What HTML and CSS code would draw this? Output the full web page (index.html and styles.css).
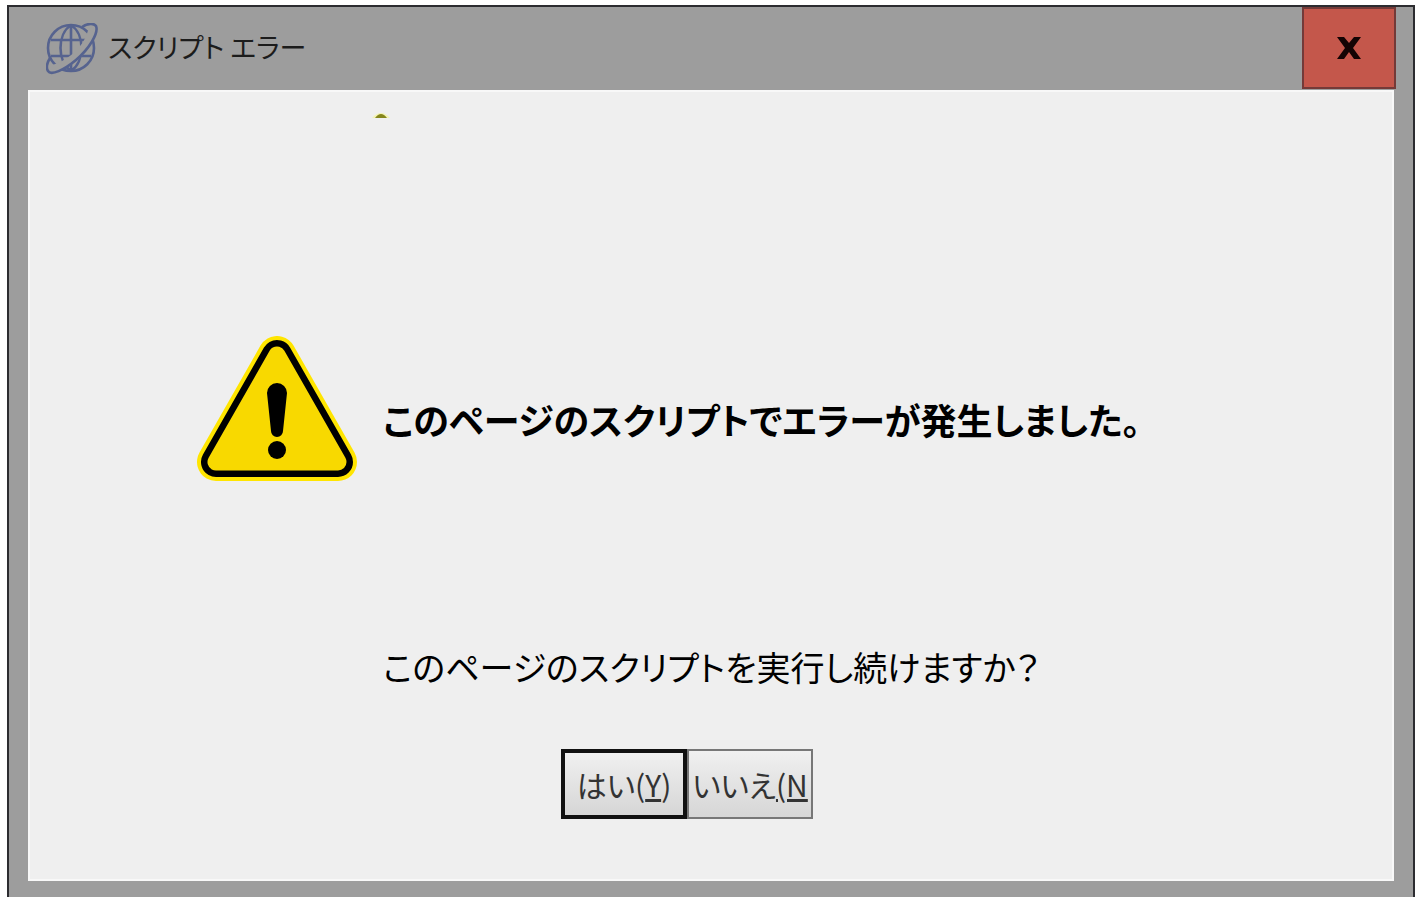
FILE: index.html
```html
<!DOCTYPE html>
<html lang="ja">

<head>
    <meta charset="UTF-8">
    <meta name="viewport" content="width=device-width, initial-scale=1.0">
    <title>スクリプト エラー</title>
    <link rel="stylesheet" href="styles.css">
</head>

<body>
    <div class="dialog" role="alertdialog" aria-labelledby="dialogTitle" aria-describedby="dialogMessage">
        <header class="title-bar">
            <svg class="globe" viewBox="0 0 52 52" aria-hidden="true">
                <circle cx="25" cy="25" r="23" />
                <path d="M25 2V48M25 2C11 11 11 39 25 48M25 2C39 11 39 39 25 48M5 17H45M5 33H45" />
                <path class="orbit-gap" d="M46 8C44 18 36 28 28 35C19 42 11 46 4 46" />
                <path d="M36 4C42 0 48 0 50 3C53 10 43 26 30 37C18 47 5 53 2 48C0 45 1 40 4 35" />
            </svg>
            <h1 class="title" id="dialogTitle">スクリプト エラー</h1>
            <button type="button" class="close" aria-label="閉じる">
                <svg viewBox="0 0 24 24" aria-hidden="true">
                    <path d="M0 1H7L12 7L17 1H24L16 12L24 23H17L12 16L7 23H0L8 12Z" />
                </svg>
            </button>
        </header>

        <main class="content">
            <svg class="speck" viewBox="0 0 18 6" aria-hidden="true">
                <path class="glow" d="M0 6Q9 -4 18 6Z" />
                <path d="M3 6Q9 -2 15 6Z" />
            </svg>

            <div class="message">
                <svg class="warning" viewBox="0 0 160 146" aria-hidden="true">
                    <path class="outer" d="M80 19L19 126H141Z" />
                    <path class="line" d="M80 19L19 126H141Z" />
                    <path class="inner" d="M80 19L19 126H141Z" />
                    <path d="M70 57A10 10 0 0 1 90 57L86 95A6 6 0 0 1 74 95Z" />
                    <circle cx="80" cy="114" r="9" />
                </svg>
                <p class="message-text" id="dialogMessage">このページのスクリプトでエラーが発生しました。</p>
            </div>

            <p class="question">このページのスクリプトを実行し続けますか？</p>

            <div class="actions">
                <button type="button" class="btn btn-default">はい(<u>Y</u>)</button>
                <button type="button" class="btn">いいえ<u>(N</u></button>
            </div>
        </main>
    </div>
</body>

</html>
```

FILE: styles.css
```css
* {
    margin: 0;
    padding: 0;
    box-sizing: border-box;
}

body {
    display: flex;
    min-height: 100vh;
    padding: 5px 5px 4px 7px;
    background-color: #fff;
    color: #000;
    font-family: "Noto Sans CJK JP", sans-serif;
    font-feature-settings: "palt";
}

.dialog {
    flex: 1;
    display: flex;
    flex-direction: column;
    padding: 0 19px 16px;
    border: 2px solid #2c2c30;
    border-bottom: none;
    background-color: #9d9d9d;
}

.title-bar {
    display: flex;
    align-items: flex-start;
    height: 83px;
    padding-left: 18px;
}

.globe {
    width: 52px;
    height: 52px;
    margin-top: 16px;
    fill: none;
    stroke: #56638f;
    stroke-width: 2.6;
}

.globe .orbit-gap {
    stroke: #9d9d9d;
    stroke-width: 8;
}

.title {
    margin: 20px 0 0 10px;
    color: #1c1c1c;
    font-size: 27px;
    font-weight: 400;
    line-height: 40px;
}

.close {
    display: flex;
    align-items: center;
    justify-content: center;
    width: 94px;
    height: 82px;
    margin-left: auto;
    margin-right: -2px;
    border: 2px solid #743a38;
    background-color: #c4574b;
    cursor: pointer;
}

.close svg {
    width: 24px;
    height: 24px;
    fill: #140404;
}

.content {
    flex: 1;
    display: flex;
    flex-direction: column;
    align-items: flex-start;
    padding-bottom: 60px;
    border: 2px solid #f8f8f8;
    background-color: #efefef;
}

.speck {
    width: 18px;
    height: 6px;
    margin: 20px 0 0 342px;
    fill: #85861c;
}

.speck .glow {
    fill: #f3f3b4;
}

.message {
    display: flex;
    align-items: center;
    margin: 218px 0 auto 167px;
}

.warning {
    width: 160px;
    height: 146px;
}

.warning .outer,
.warning .line,
.warning .inner {
    stroke-linejoin: round;
}

.warning .outer {
    fill: #ffe500;
    stroke: #ffe500;
    stroke-width: 38;
}

.warning .line {
    stroke: #000;
    stroke-width: 30;
}

.warning .inner {
    fill: #f8d900;
    stroke: #f8d900;
    stroke-width: 17;
}

.message-text {
    padding-top: 20px;
    margin-left: 26px;
    font-size: 36px;
    font-weight: 700;
    line-height: 48px;
}

.question {
    margin: 0 0 58px 353px;
    font-size: 34px;
    line-height: 48px;
}

.actions {
    display: flex;
    margin-left: 531px;
}

.btn {
    width: 126px;
    height: 70px;
    border: 2px solid #777;
    background: linear-gradient(#f0f0f0, #d6d6d6);
    color: #333;
    font-family: inherit;
    font-feature-settings: inherit;
    font-size: 30px;
    line-height: 40px;
    white-space: nowrap;
    cursor: pointer;
}

.btn-default {
    border: 4px solid #111;
}
```
